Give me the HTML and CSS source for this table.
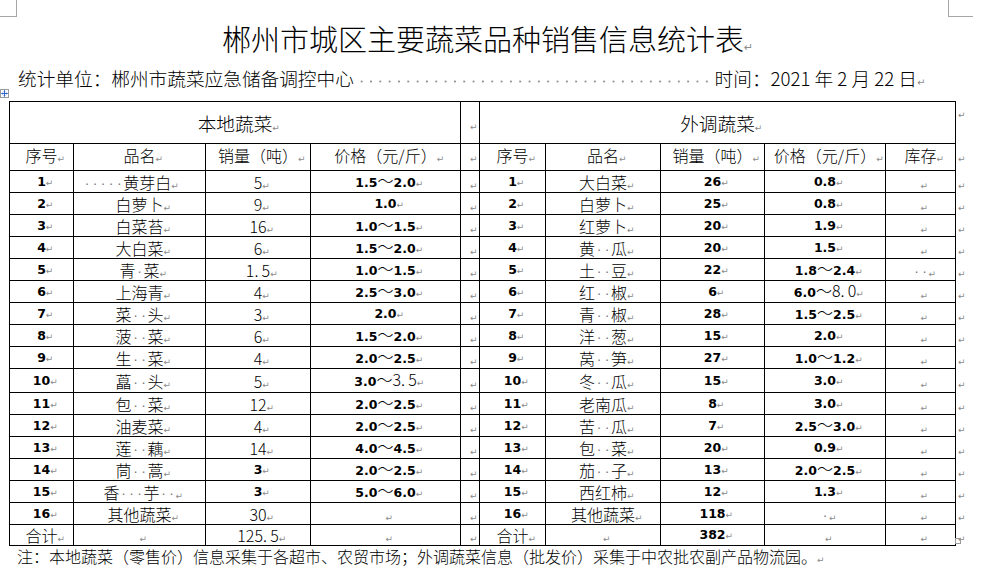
FILE: index.html
```html
<!DOCTYPE html>
<html lang="zh-CN">
<head>
<meta charset="utf-8">
<title>郴州市城区主要蔬菜品种销售信息统计表</title>
<link rel="stylesheet" href="styles.css">
</head>
<body>
<div class="page">
  <div class="corner tl"></div>
  <div class="corner tr"></div>
  <h1 class="title">郴州市城区主要蔬菜品种销售信息统计表<span class="p"></span></h1>
  <div class="meta">
    <span>统计单位：郴州市蔬菜应急储备调控中心</span>
    <span class="lead"></span>
    <span class="date">时间：2021 年 2 月 22 日<span class="p"></span></span>
  </div>
  <div class="tablewrap">
    <span class="move"><svg width="9" height="9" viewBox="0 0 9 9"><rect x="0.5" y="0.5" width="8" height="8" fill="#fff" stroke="#9a9a9a"/><path d="M4.5 1.5v6M1.5 4.5h6" stroke="#2f62c8" stroke-width="1"/><path d="M4.5 1.2l-1.3 1.4h2.6zM4.5 7.8l-1.3-1.4h2.6zM1.2 4.5l1.4-1.3v2.6zM7.8 4.5l-1.4-1.3v2.6z" fill="#2f62c8"/></svg></span>
    <table class="sheet">
      <colgroup>
        <col class="c1"><col class="c2"><col class="c3"><col class="c4"><col class="c5">
        <col class="c6"><col class="c7"><col class="c8"><col class="c9"><col class="c10"><col class="c11">
      </colgroup>
      <tr class="r-head">
        <td class="hd" colspan="4">本地蔬菜</td><td></td><td class="hd" colspan="5">外调蔬菜</td><td class="rm top"></td>
      </tr>
      <tr class="r-cols">
        <td>序号</td><td>品名</td><td>销量（吨）</td><td>价格（元/斤）</td><td></td>
        <td>序号</td><td>品名</td><td>销量（吨）</td><td>价格（元/斤）</td><td>库存</td><td class="rm"></td>
      </tr>
      <tr class="r21">
        <td class="n">1</td><td class="la"><span class="sp">·····</span>黄芽白</td><td>5</td><td class="n">1.5<span class="t">～</span>2.0</td><td></td>
        <td class="n">1</td><td>大白菜</td><td class="n">26</td><td class="n">0.8</td><td></td><td class="rm"></td>
      </tr>
      <tr class="r22">
        <td class="n">2</td><td>白萝卜</td><td>9</td><td class="n">1.0</td><td></td>
        <td class="n">2</td><td>白萝卜</td><td class="n">25</td><td class="n">0.8</td><td></td><td class="rm"></td>
      </tr>
      <tr class="r21">
        <td class="n">3</td><td>白菜苔</td><td>16</td><td class="n">1.0<span class="t">～</span>1.5</td><td></td>
        <td class="n">3</td><td>红萝卜</td><td class="n">20</td><td class="n">1.9</td><td></td><td class="rm"></td>
      </tr>
      <tr class="r22">
        <td class="n">4</td><td>大白菜</td><td>6</td><td class="n">1.5<span class="t">～</span>2.0</td><td></td>
        <td class="n">4</td><td>黄<span class="sp">··</span>瓜</td><td class="n">20</td><td class="n">1.5</td><td></td><td class="rm"></td>
      </tr>
      <tr class="r21">
        <td class="n">5</td><td>青<span class="sp">·</span>菜</td><td>1.&#8201;5</td><td class="n">1.0<span class="t">～</span>1.5</td><td></td>
        <td class="n">5</td><td>土<span class="sp">··</span>豆</td><td class="n">22</td><td class="n">1.8<span class="t">～</span>2.4</td><td><span class="sp">··</span></td><td class="rm"></td>
      </tr>
      <tr class="r22">
        <td class="n">6</td><td>上海青</td><td>4</td><td class="n">2.5<span class="t">～</span>3.0</td><td></td>
        <td class="n">6</td><td>红<span class="sp">··</span>椒</td><td class="n">6</td><td class="n">6.0<span class="t">～8.&#8201;0</span></td><td></td><td class="rm"></td>
      </tr>
      <tr class="r21">
        <td class="n">7</td><td>菜<span class="sp">··</span>头</td><td>3</td><td class="n">2.0</td><td></td>
        <td class="n">7</td><td>青<span class="sp">··</span>椒</td><td class="n">28</td><td class="n">1.5<span class="t">～</span>2.5</td><td></td><td class="rm"></td>
      </tr>
      <tr class="r22">
        <td class="n">8</td><td>菠<span class="sp">··</span>菜</td><td>6</td><td class="n">1.5<span class="t">～</span>2.0</td><td></td>
        <td class="n">8</td><td>洋<span class="sp">··</span>葱</td><td class="n">15</td><td class="n">2.0</td><td></td><td class="rm"></td>
      </tr>
      <tr class="r21">
        <td class="n">9</td><td>生<span class="sp">··</span>菜</td><td>4</td><td class="n">2.0<span class="t">～</span>2.5</td><td></td>
        <td class="n">9</td><td>莴<span class="sp">··</span>笋</td><td class="n">27</td><td class="n">1.0<span class="t">～</span>1.2</td><td></td><td class="rm"></td>
      </tr>
      <tr class="r24">
        <td class="n">10</td><td>藠<span class="sp">··</span>头</td><td>5</td><td class="n">3.0<span class="t">～3.&#8201;5</span></td><td></td>
        <td class="n">10</td><td>冬<span class="sp">··</span>瓜</td><td class="n">15</td><td class="n">3.0</td><td></td><td class="rm"></td>
      </tr>
      <tr class="r21">
        <td class="n">11</td><td>包<span class="sp">··</span>菜</td><td>12</td><td class="n">2.0<span class="t">～</span>2.5</td><td></td>
        <td class="n">11</td><td>老南瓜</td><td class="n">8</td><td class="n">3.0</td><td></td><td class="rm"></td>
      </tr>
      <tr class="r22">
        <td class="n">12</td><td>油麦菜</td><td>4</td><td class="n">2.0<span class="t">～</span>2.5</td><td></td>
        <td class="n">12</td><td>苦<span class="sp">··</span>瓜</td><td class="n">7</td><td class="n">2.5<span class="t">～</span>3.0</td><td></td><td class="rm"></td>
      </tr>
      <tr class="r22">
        <td class="n">13</td><td>莲<span class="sp">··</span>藕</td><td>14</td><td class="n">4.0<span class="t">～</span>4.5</td><td></td>
        <td class="n">13</td><td>包<span class="sp">··</span>菜</td><td class="n">20</td><td class="n">0.9</td><td></td><td class="rm"></td>
      </tr>
      <tr class="r21">
        <td class="n">14</td><td>茼<span class="sp">··</span>蒿</td><td class="n">3</td><td class="n">2.0<span class="t">～</span>2.5</td><td></td>
        <td class="n">14</td><td>茄<span class="sp">··</span>子</td><td class="n">13</td><td class="n">2.0<span class="t">～</span>2.5</td><td></td><td class="rm"></td>
      </tr>
      <tr class="r21">
        <td class="n">15</td><td>香<span class="sp">···</span>芋<span class="sp">··</span></td><td class="n">3</td><td class="n">5.0<span class="t">～</span>6.0</td><td></td>
        <td class="n">15</td><td>西红柿</td><td class="n">12</td><td class="n">1.3</td><td></td><td class="rm"></td>
      </tr>
      <tr class="r22">
        <td class="n">16</td><td>其他蔬菜</td><td>30</td><td></td><td></td>
        <td class="n">16</td><td>其他蔬菜</td><td class="n">118</td><td><span class="sp">·</span></td><td></td><td class="rm"></td>
      </tr>
      <tr class="r21">
        <td>合计</td><td></td><td>125.&#8201;5</td><td></td><td></td>
        <td>合计</td><td></td><td class="n">382</td><td></td><td></td><td class="rm"></td>
      </tr>
    </table>
    <span class="resize"></span>
  </div>
  <p class="note">注：本地蔬菜（零售价）信息采集于各超市、农贸市场；外调蔬菜信息（批发价）采集于中农批农副产品物流园。<span class="p"></span></p>
</div>
</body>
</html>
```
FILE: styles.css
```css
* { box-sizing: border-box; }
html, body { margin: 0; padding: 0; background: #fff; }
body {
  color: #000;
  font-family: "Noto Sans CJK SC", "Noto Sans", sans-serif;
  font-weight: 300;
}
.page { position: relative; width: 997px; height: 571px; overflow: hidden; }

.corner { position: absolute; top: 0; border: 0 solid #a6a6a6; }
.corner.tl { left: 0; width: 17px; height: 17px; border-right-width: 1px; border-bottom-width: 1px; }
.corner.tr { left: 948px; width: 25px; height: 17px; border-left-width: 1px; border-bottom-width: 1px; }

.p, td::after {
  display: inline-block;
  width: 0;
  white-space: nowrap;
  font: normal 9px/1 "DejaVu Sans", sans-serif;
  color: #8a8a8a;
}
.p::after { content: "↵"; }
td::after { content: "↵"; }

.title {
  margin: 20px 0 0;
  padding-left: 222px;
  font-size: 29px;
  line-height: 36px;
  font-weight: 300;
}
.title .p { font-size: 11px; }

.meta {
  display: flex;
  align-items: center;
  width: 917px;
  margin-top: 10px;
  padding-left: 18px;
  font-size: 18.67px;
  line-height: 24px;
}
.lead {
  flex: 1;
  height: 24px;
  margin: 0 4px 0 3px;
  background-image: radial-gradient(circle at 4.6px 15.5px, #8f8f8f 0, #8f8f8f 0.8px, transparent 1.3px);
  background-size: 9.33px 24px;
  background-repeat: repeat-x;
}
.date .p { font-size: 10px; }

.tablewrap { position: relative; margin-top: 11px; }
.move { position: absolute; left: 0; top: -12px; width: 9px; height: 9px; line-height: 0; }
.resize { position: absolute; left: 955px; top: 437px; width: 6px; height: 6px; border: 1px solid #9a9a9a; }

.sheet {
  border-collapse: collapse;
  table-layout: fixed;
  width: 968px;
  margin-left: 9px;
}
.c1 { width: 64px; }
.c2 { width: 132px; }
.c3 { width: 105px; }
.c4 { width: 150px; }
.c5 { width: 19px; }
.c6 { width: 66px; }
.c7 { width: 115px; }
.c8 { width: 104px; }
.c9 { width: 121px; }
.c10 { width: 70px; }
.c11 { width: 22px; }

.sheet td {
  border: 1px solid #000;
  padding: 0 1px;
  text-align: center;
  vertical-align: middle;
  font-size: 16px;
  line-height: 18px;
  white-space: nowrap;
  overflow: visible;
}
.sheet td.rm { border: none; text-align: left; padding-left: 2px; }
.sheet td.rm.top { vertical-align: top; padding-top: 0; }

.r-head { height: 42px; }
.r-cols { height: 27px; }
.r21 { height: 21px; }
.r22 { height: 22px; }
.r24 { height: 24px; }

.sheet td.hd { font-size: 18.67px; line-height: 22px; }
.r-cols td { padding-bottom: 4px; }

.sheet td.n {
  font-family: "DejaVu Sans", "Noto Sans CJK SC", sans-serif;
  font-weight: bold;
  font-size: 12.5px;
}
.t {
  font-family: "Noto Sans CJK SC", sans-serif;
  font-weight: 300;
  font-size: 16px;
}
.sheet td.la { text-align: left; padding-left: 9px; }

.sp {
  display: inline-block;
  font: normal 13px/1 "DejaVu Sans", sans-serif;
  color: #7a7a7a;
  letter-spacing: 3.9px;
  padding-left: 2px;
  margin-right: -2px;
}

.note {
  margin: 0;
  padding-left: 17px;
  font-size: 16px;
  line-height: 20px;
}
```
